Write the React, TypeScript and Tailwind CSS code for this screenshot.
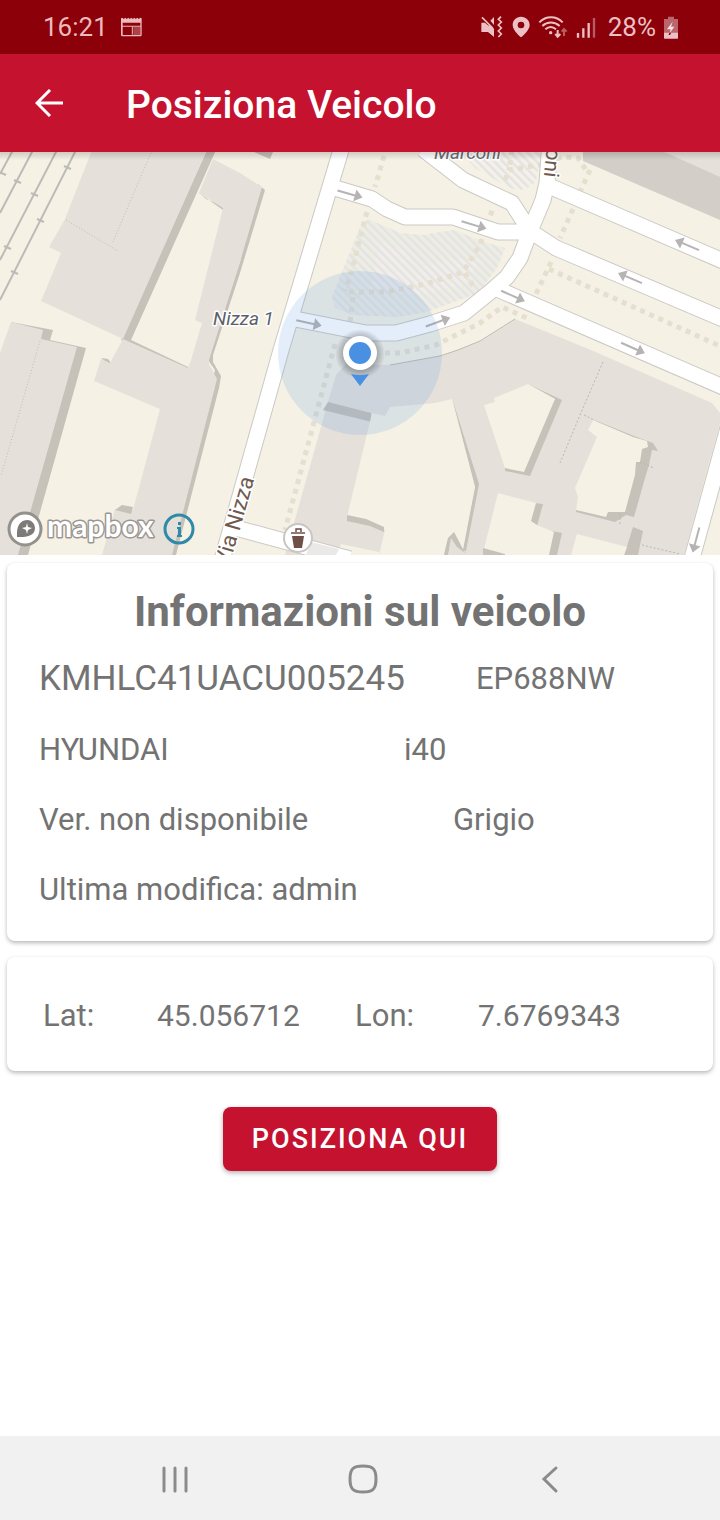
import type { ReactNode } from 'react';

const ROBOTO = 'Roboto, "Liberation Sans", sans-serif';

function MutedVibrateIcon() {
  return (
    <svg aria-hidden="true" viewBox="58 43 72 72" className="size-6 fill-[#ecc0c4]">
      <path d="M62 66h11l8 7 19 18v17L82 94H62z" />
      <path d="M89 60l11-11v24zM84 70l16 14v24l-16-14z" />
      <path d="M64 50l32 32" fill="none" stroke="#ecc0c4" strokeWidth="5" />
      <path d="M121 48l-8 8 9 8-9 9 9 9-9 9 9 9-9 9" fill="none" stroke="#ecc0c4" strokeWidth="5" />
    </svg>
  );
}

function PinIcon() {
  return (
    <svg aria-hidden="true" viewBox="154 43 54 72" className="h-6 w-[18px] fill-[#ecc0c4]">
      <path fillRule="evenodd" d="M181 48c-15 0-25 11-25 25 0 17 25 37 25 37s26-20 26-37c0-14-11-25-26-25zm0 15a10 10 0 1 1 0 20 10 10 0 0 1 0-20z" />
    </svg>
  );
}

function WifiIcon() {
  return (
    <svg aria-hidden="true" viewBox="234 43 90 72" className="h-6 w-[30px]" fill="none" stroke="#ecc0c4" strokeWidth="6">
      <path d="M238 65c20-20 50-20 70 0M247 76c15-14 36-14 52 0M256 86c10-9 22-9 32 0" />
      <circle cx="272" cy="96" r="5" fill="#ecc0c4" stroke="none" />
      <path d="M293 88v20M286 100l7 8 8-8" />
      <path d="M312 106V86M305 93l7-8 8 8" stroke="#b55d63" />
    </svg>
  );
}

function SignalIcon() {
  return (
    <svg aria-hidden="true" viewBox="342 43 60 72" className="h-6 w-5" strokeWidth="7" stroke="#ecc0c4">
      <path d="M348 97v14M364 83v28M380 67v44" />
      <path d="M396 52v59" stroke="#b55d63" />
    </svg>
  );
}

function BatteryIcon() {
  return (
    <svg aria-hidden="true" viewBox="612 43 42 72" className="h-6 w-[14px]">
      <path d="M624 48h18v7h12v42h-42V55h12z" fill="#b9676d" />
      <path d="M612 96h42v16q0 2-2 2h-38q-2 0-2-2z" fill="#ecc0c4" />
      <path d="M638 63l-17 23h11l-3 12 14-20h-10z" fill="#ffe3e5" />
      <path d="M628 96h6l-4 7h-4z" fill="#8b0009" />
    </svg>
  );
}

function NewsIcon() {
  return (
    <svg aria-hidden="true" viewBox="360 52 69 60" className="h-5 w-[23px]">
      <path fillRule="evenodd" fill="#ecb9bd" d="M363 56l4-2 4 4 5-4 4 4 5-4 4 4 5-4 4 4 5-4 4 4 5-4 4 4 5-4 4 2v50q0 4-4 4h-54q-4 0-4-4zM368 69v9h53v-9zM368 81v25h53V81z" />
      <path d="M397 81v24" stroke="#ecb9bd" strokeWidth="3" />
      <path d="M400 85h22M400 91h22M400 97h22M400 103h22" stroke="#d08388" strokeWidth="3" />
    </svg>
  );
}

function StatusBar() {
  return (
    <div className="flex h-[54px] items-center bg-[#8b0009] pr-[42px] pl-[43px] text-[26px] text-[#ecb9bd]">
      <span className="mr-3">16:21</span>
      <NewsIcon />
      <div className="ml-auto flex items-center gap-2">
        <MutedVibrateIcon />
        <PinIcon />
        <WifiIcon />
        <SignalIcon />
        <span className="ml-1 text-[#ecc0c4]">28%</span>
        <BatteryIcon />
      </div>
    </div>
  );
}

const streets = [
  'M341 150L281 350L222 560',
  'M335 188L372 199L387 209L405 217H453L498 232H530',
  'M423 149L463 180L512 203L530 231',
  'M550 140L547 183L543 200L530 231L520 258L507 277L490 292L464 313L430 324L396 333H366L290 318',
  'M549 186L730 264',
  'M530 231L556 248L730 322',
  'M495 288L730 390',
  'M737 395L691 562',
  'M236 528L350 559',
];

const footpaths = [
  'M384 156L375 187M367 212L360 238L352 270L345 291M349 292H385L426 284L463 272L480 245L493 208M465 273L475 289',
  'M353 297L350 322M335 344L285 530',
  'M385 353H400L436 345L480 323L502 307L527 318',
  'M573 209L560 238M551 262L536 294M549 269L720 346',
  'M590 170L580 192M505 180L509 170L545 164L562 157L578 158L588 173',
  'M512 150L509 170',
];

const streetArrows = [
  [350, 194, 16],
  [474, 225, 17],
  [309, 323, 12],
  [438, 322, -20],
  [513, 296, 24],
  [633, 348, 24],
  [687, 245, 203],
  [630, 278, 203],
  [696, 540, 105],
];

const railTies = [
  [67, 167],
  [40, 220],
  [14, 272],
  [34, 194],
  [7, 247],
  [17, 181],
  [2, 173],
];

function MapView() {
  return (
    <svg
      role="img"
      aria-label="Mappa"
      viewBox="0 152 720 403"
      preserveAspectRatio="xMidYMid slice"
      className="block w-full bg-[#f5f1e4]"
      style={{ fontFamily: ROBOTO }}
    >
      <defs>
        <pattern id="hatch" width="6" height="6" patternUnits="userSpaceOnUse" patternTransform="rotate(-45)">
          <path d="M1 0V6" stroke="#e2e3e8" strokeWidth="3" />
        </pattern>
        <linearGradient id="barShadow" x1="0" y1="0" x2="0" y2="1">
          <stop offset="0" stopColor="#000" stopOpacity="0.16" />
          <stop offset="1" stopColor="#000" stopOpacity="0" />
        </linearGradient>
        <radialGradient id="dotShadow">
          <stop offset="0.6" stopColor="#000" stopOpacity="0.3" />
          <stop offset="1" stopColor="#000" stopOpacity="0" />
        </radialGradient>
      </defs>

      {/* railway */}
      <g stroke="#bcbbb8" strokeWidth="2" fill="none">
        <path d="M76 150L0 300M57 150L0 260M33 150L0 213M13 150L0 174" />
        {railTies.map(([x, y]) => (
          <path key={`${x}-${y}`} d={`M${x - 3} ${y - 1}l7 3`} />
        ))}
      </g>

      {/* gardens */}
      <path d="M368 219L400 233L423 235L453 230L487 243L505 248L497 268L478 293L427 312L397 317L353 315L335 308L332 297L360 227Z" fill="#eeeddf" />
      <path d="M380 242L408 252L415 270L450 258L480 260L465 285L420 295L370 290Z" fill="#f3eee5" />
      <path d="M368 219L400 233L423 235L453 230L487 243L505 248L497 268L478 293L427 312L397 317L353 315L335 308L332 297L360 227Z" fill="url(#hatch)" />
      <path d="M462 152H541L536 181Q524 195 508 187L475 168Z" fill="url(#hatch)" />

      {/* building shading */}
      <g fill="#c6c1b9">
        <path d="M207 150H216L131 340L188 367L188 370L121 340Z" />
        <path d="M199 193L206 199L223 206V210Z" />
        <path d="M258 184L265 190L240 273L213 355V362L221 376L219 388L176 555H168L215 370L208 360L240 262Z" />
        <path d="M11 322L53 330L50 340L86 348L28 555H14L70 350L40 340Z" />
        <path d="M101 358L108 359L112 364V367Z" />
        <path d="M254 152H273L270 159Z" />
      </g>
      <path d="M583 150H720V220L583 161Z" fill="#d3cec7" />

      {/* buildings */}
      <g fill="#e5e1da">
        <path d="M92 150H207L123 339L188 368L191 360L202 323L195 320L223 208L199 193L213 159L240 173L262 187L240 262L209 360V364L217 379L172 555H102L133 510L160 409L94 381L101 359L110 363L123 339L41 301L61 253L49 247L65 219Z" />
        <path d="M102 555L115 509L133 510V555Z" />
        <path d="M11 322L43 330L41 339L77 347L18 555H0V353Z" />
        <path d="M660 150H720V177Z" />
        <path d="M346 364L390 365L440 356L480 341L515 319L591 350L712 403L720 413V423L684 555H285L328 402L336 375Z" />
      </g>
      <path d="M115 510L122 505L133 507L131 514Z" fill="#c6c1b9" />
      <path d="M66 220L118 251M151 153L129 204L113 242M40 341L1 476" fill="none" stroke="#c1bcb4" strokeDasharray="1 2" />

      {/* courtyard shading */}
      <g fill="#c6c1b9">
        <path d="M452 398L479 484L466 551L462 550L475 487Z" />
        <path d="M328 402L371 413L372 422L323 410Z" />
        <path d="M528 384L562 400L530 476L505 471V467L555 399Z" />
        <path d="M592 419L634 436L653 443L658 451L652 450L649 465L645 478L634 517L626 515L615 522L576 512V509L640 449Z" />
        <path d="M534 503L543 504L537 526L530 521ZM552 531L562 533L557 555H547Z" />
        <path d="M633 527L643 531L638 555H624L627 546Z" />
      </g>
      <g fill="#f5f1e4">
        <path d="M372 413L385 416L390 407L435 403L452 399L475 487L463 550L454 533L448 538L444 555H379L385 530L347 517Z" />
        <path d="M528 384L555 399L524 472L505 468L484 405L495 402L494 398Z" />
        <path d="M593 420L633 437L647 441L648 447L642 449L640 462L636 462L635 475L625 512H608L606 517L576 510L578 497L575 488L597 437L588 430Z" />
        <path d="M498 493L536 503L531 521L537 525L554 532L549 555H484V549Z" />
        <path d="M577 534L627 547L624 555H571Z" />
        <path d="M341 544L379 552V560H336Z" />
      </g>
      <g fill="#c6c1b9">
        <path d="M347 515L366 519L384 527V532L370 526L347 521Z" />
        <path d="M454 532L465 553L457 547L451 538L448 555H444L448 538Z" />
        <path d="M483 548L505 554V555H483Z" />
      </g>
      <path d="M603 362L580 415L560 463M584 415L594 420M642 545L680 554M640 462L654 468M620 514V524" fill="none" stroke="#bbb6ae" strokeDasharray="2 2" />
      <path d="M390 365L440 356L458 350L480 341L515 319" fill="none" stroke="#c1bcb4" />

      {/* streets */}
      <path d={footpaths.join('')} fill="none" stroke="#e4dfcf" strokeWidth="5" strokeDasharray="5 5" />
      <g fill="none" strokeLinejoin="round">
        <path d={streets.join('')} stroke="#cbc9c5" strokeWidth="17" />
        <path d={streets.join('')} stroke="#fff" strokeWidth="15" />
      </g>
      <path d="M311 542L339 549L336 555H306Z" fill="#ebe9e8" />
      {streetArrows.map(([x, y, angle]) => (
        <g key={`${x}-${y}`} transform={`translate(${x} ${y}) rotate(${angle})`}>
          <path d="M-13 0H8" stroke="#b6b3b3" strokeWidth="2" />
          <path d="M5-6L13 0L5 6Z" fill="#b6b3b3" />
        </g>
      ))}

      {/* labels */}
      <g stroke="#fff" strokeWidth="3" strokeLinejoin="round" paintOrder="stroke">
        <text x="213" y="325" fontSize="19" fontStyle="italic" fill="#5c5e68">Nizza 1</text>
        <text x="434" y="159" fontSize="19" fontStyle="italic" fill="#6c6c72">Marconi</text>
        <text transform="translate(229 567) rotate(-74)" fontSize="22" fill="#6f5a50">Via Nizza</text>
        <text transform="translate(548 137) rotate(96)" fontSize="21" fill="#6f5a50">coni</text>
      </g>

      {/* point of interest */}
      <circle cx="298" cy="538" r="14" fill="#fff" stroke="#c8c5c2" strokeWidth="2" />
      <path d="M292 536H304L302 548H294Z" fill="#6e5047" />
      <path d="M291 533H305M296 532V529H301V532" fill="none" stroke="#6e5047" strokeWidth="1.5" />

      {/* current position */}
      <circle cx="360" cy="353" r="82" fill="#4a90e2" fillOpacity="0.15" />
      <circle cx="360" cy="354" r="25" fill="url(#dotShadow)" />
      <path d="M351 374Q360 376 369 374L360 386Z" fill="#4a90e2" />
      <circle cx="360" cy="353" r="17" fill="#fff" />
      <circle cx="360" cy="353" r="11" fill="#4a90e2" />

      {/* attribution */}
      <circle cx="25" cy="529" r="16" fill="#fff" stroke="#94918c" strokeWidth="3" />
      <path d="M17 537Q16 520 28 520A8 8 0 0 1 35 528Q35 538 17 537Z" fill="#7d7b78" />
      <path d="M27 523L28 527L32 528L28 530L27 534L26 530L22 528L26 527Z" fill="#fff" />
      <text x="47" y="537" fontSize="30" fontWeight="700" fill="#fff" stroke="#9a9792" strokeWidth="3" strokeLinejoin="round" paintOrder="stroke" style={{ fontFamily: 'Lato, sans-serif' }}>
        mapbox
      </text>
      <circle cx="179" cy="529" r="14" fill="none" stroke="#2d8aa8" strokeWidth="3" />
      <path d="M178 522H181V525H178ZM177 527H181V535H182V537H177V535H178V529H177Z" fill="#2d8aa8" />

      <rect x="0" y="152" width="720" height="8" fill="url(#barShadow)" />
    </svg>
  );
}

function Card({ children, className }: { children: ReactNode; className: string }) {
  return (
    <section className={`rounded-lg bg-white shadow-[0_2px_4px_rgba(0,0,0,0.28)] ${className}`}>
      {children}
    </section>
  );
}

export default function App() {
  return (
    <div className="flex min-h-screen flex-col bg-white text-[#737373]" style={{ fontFamily: ROBOTO }}>
      <StatusBar />
      <header className="flex h-[98px] items-center bg-[#c4122f] pl-[35px] text-white">
        <button type="button" aria-label="Indietro" className="mr-[63px]">
          <svg aria-hidden="true" viewBox="0 0 28 28" className="size-7" fill="none" stroke="currentColor" strokeWidth="3">
            <path d="M28 14H3M15 1L2 14L15 27" />
          </svg>
        </button>
        <h1 className="pt-1 text-[39px] leading-[48px] font-medium">Posiziona Veicolo</h1>
      </header>

      <MapView />

      <main className="flex flex-col items-center px-[7px] pt-2">
        <Card className="w-full px-8 pt-[25px] pb-4">
          <h2 className="text-center text-[42px] leading-[48px] font-bold">Informazioni sul veicolo</h2>
          <div className="mt-2 text-[31px] leading-[70px]">
            <div className="grid grid-cols-[437fr_205fr]">
              <span className="text-[35px]">KMHLC41UACU005245</span>
              <span>EP688NW</span>
            </div>
            <div className="mt-px grid grid-cols-[365fr_277fr]">
              <span>HYUNDAI</span>
              <span>i40</span>
            </div>
            <div className="grid grid-cols-[414fr_228fr]">
              <span>Ver. non disponibile</span>
              <span>Grigio</span>
            </div>
            <p>Ultima modifica: admin</p>
          </div>
        </Card>

        <Card className="mt-4 grid w-full grid-cols-[114fr_198fr_123fr_199fr] px-9 pt-9 pb-8 text-[31px] leading-[46px]">
          <span>Lat:</span>
          <span className="text-[30px]">45.056712</span>
          <span>Lon:</span>
          <span className="text-[30px]">7.6769343</span>
        </Card>

        <button
          type="button"
          className="mt-9 h-16 rounded-lg bg-[#c4122f] px-[29px] text-[27px] font-medium tracking-[2px] text-white shadow-[0_2px_5px_rgba(0,0,0,0.3)]"
        >
          POSIZIONA QUI
        </button>
      </main>

      <nav className="mt-auto flex h-[84px] items-center justify-between bg-[#f1f1f1] pt-0.5 pr-[154px] pl-[159px] text-[#8b8b8b]">
        <button type="button" aria-label="App recenti">
          <svg aria-hidden="true" viewBox="0 0 32 32" className="size-8" fill="none" stroke="currentColor" strokeWidth="3" strokeLinecap="round">
            <path d="M5 5V28M16 5V28M27 5V28" />
          </svg>
        </button>
        <button type="button" aria-label="Home">
          <svg aria-hidden="true" viewBox="0 0 32 32" className="size-8" fill="none" stroke="currentColor" strokeWidth="3">
            <path d="M16 3C26 3 29 6 29 16S26 29 16 29 3 26 3 16 6 3 16 3Z" />
          </svg>
        </button>
        <button type="button" aria-label="Indietro">
          <svg aria-hidden="true" viewBox="0 0 32 32" className="size-8" fill="none" stroke="currentColor" strokeWidth="3" strokeLinecap="round">
            <path d="M22 5L10 16L22 28" />
          </svg>
        </button>
      </nav>
    </div>
  );
}
